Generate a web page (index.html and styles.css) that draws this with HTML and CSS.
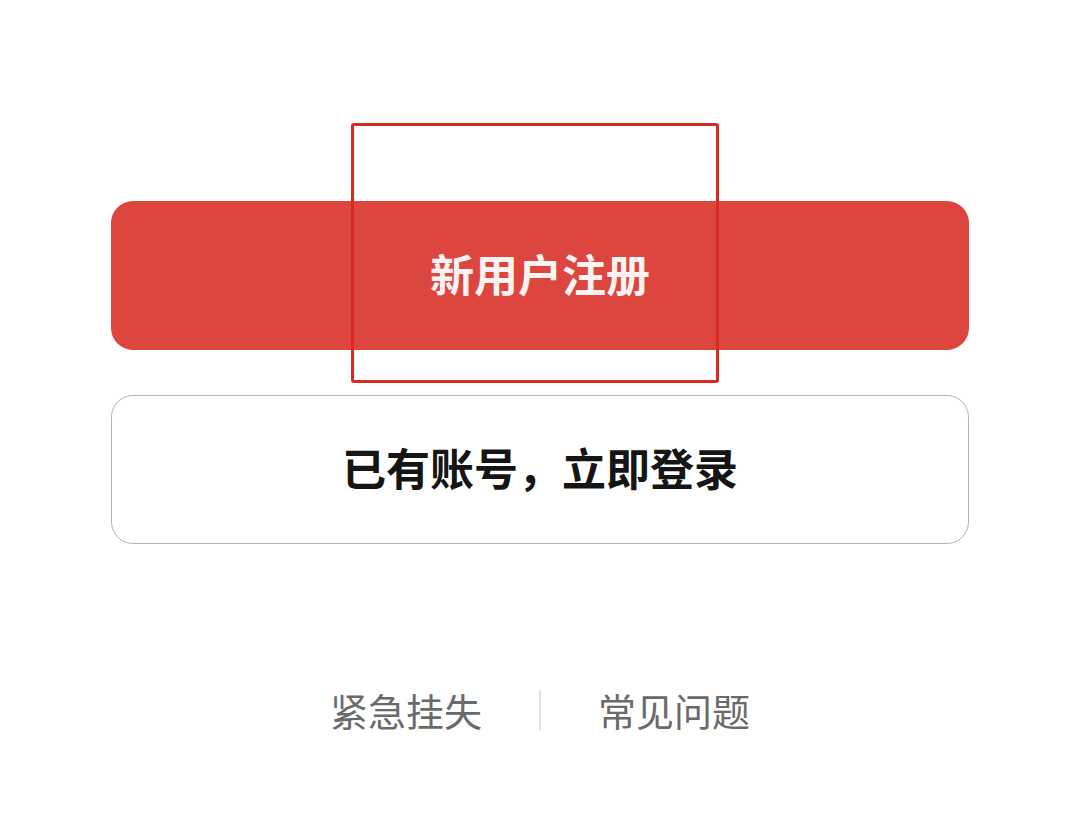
FILE: index.html
```html
<!DOCTYPE html>
<html lang="zh-CN">
<head>
<meta charset="utf-8">
<title>注册</title>
<link rel="stylesheet" href="styles.css">
</head>
<body>
<div class="page">
  <div class="actions">
    <div class="btn btn-primary">新用户注册</div>
    <div class="btn btn-outline">已有账号，立即登录</div>
  </div>
  <div class="links">
    <span class="link">紧急挂失</span>
    <span class="divider"></span>
    <span class="link">常见问题</span>
  </div>
  <div class="highlight"></div>
</div>
</body>
</html>
```
FILE: styles.css
```css
html, body {
  margin: 0;
  padding: 0;
  background: #ffffff;
}
body {
  width: 1080px;
  height: 820px;
  overflow: hidden;
  font-family: "Noto Sans CJK SC", "Noto Sans", sans-serif;
}
.page {
  position: relative;
  width: 1080px;
  height: 820px;
  padding-top: 201px;
  box-sizing: border-box;
}
.actions {
  display: flex;
  flex-direction: column;
  gap: 45px;
  margin: 0 111px;
}
.btn {
  height: 149px;
  box-sizing: border-box;
  border-radius: 22px;
  display: flex;
  align-items: center;
  justify-content: center;
  font-size: 44px;
  letter-spacing: 0;
  padding-bottom: 6px;
}
.btn-primary {
  background: #dc463e;
  color: #fdf3f2;
  font-weight: 700;
}
.btn-outline {
  background: #ffffff;
  border: 1.5px solid #b4b4b4;
  color: #151515;
  font-weight: 700;
}
.links {
  display: flex;
  align-items: center;
  justify-content: center;
  gap: 57px;
  margin-top: 141px;
}
.link {
  font-size: 38px;
  color: #6a6a6a;
  line-height: 50px;
}
.divider {
  width: 2px;
  height: 40px;
  background: #e2e2e2;
}
.highlight {
  position: absolute;
  left: 351px;
  top: 123px;
  width: 368px;
  height: 260px;
  box-sizing: border-box;
  border: 3px solid #d92a21;
  border-radius: 3px;
}
```
